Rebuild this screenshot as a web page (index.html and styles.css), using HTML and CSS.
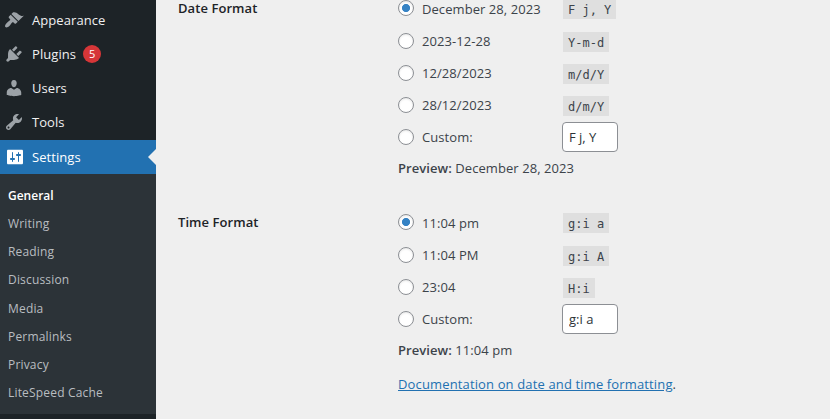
FILE: index.html
```
<!DOCTYPE html>
<html lang="en">
<head>
    <meta charset="UTF-8">
    <meta name="viewport" content="width=device-width, initial-scale=1.0">
    <title>General Settings</title>
    <link rel="stylesheet" href="styles.css">
</head>
<body>
    <div class="wrap">
        <nav class="menu">
            <a class="item">
                <svg viewBox="0 0 20 20"><path d="M14.48 11.06L7.41 3.99l1.5-1.5c.5-.56 2.3-.47 3.51.32 1.21.8 1.43 1.28 2.91 2.1 1.18.64 2.45 1.26 4.45.85zm-.71.71L6.7 4.7 4.93 6.47c-.39.39-.39 1.02 0 1.41l1.06 1.06c.39.39.39 1.03 0 1.42-.6.6-1.43 1.11-2.21 1.69-.35.26-.7.53-1.01.84C1.43 14.23.4 16.08 1.4 17.07c.99 1 2.84-.03 4.18-1.36.31-.31.58-.66.85-1.02.57-.78 1.08-1.61 1.69-2.21.39-.39 1.02-.39 1.41 0l1.06 1.06c.39.39 1.02.39 1.41 0z"/></svg>
                <span>Appearance</span>
            </a>
            <a class="item">
                <svg viewBox="0 0 20 20"><path d="M13.11 4.36L9.87 7.6 8 5.73l3.24-3.24c.35-.34 1.05-.2 1.56.32.52.51.66 1.21.31 1.55zm-8 1.77l.91-1.12 9.01 9.01-1.19.84c-.71.71-2.63 1.16-3.82 1.16H6.14L4.9 17.26c-.59.59-1.54.59-2.12 0-.59-.58-.59-1.53 0-2.12l1.24-1.24v-3.88c0-1.13.4-3.19 1.09-3.89zm7.26 3.97l3.24-3.24c.34-.35 1.04-.21 1.55.31.52.51.66 1.21.31 1.55l-3.24 3.25z"/></svg>
                <span>Plugins</span>
                <span class="count">5</span>
            </a>
            <a class="item">
                <svg viewBox="0 0 20 20"><path d="M10 9.25c-2.27 0-2.73-3.44-2.73-3.44C7 4.02 7.82 2 9.97 2c2.16 0 2.98 2.02 2.71 3.81 0 0-.41 3.44-2.68 3.44zm0 2.57L12.72 10c2.39 0 4.52 2.33 4.52 4.53v2.49s-3.65 1.13-7.24 1.13c-3.65 0-7.24-1.13-7.24-1.13v-2.49c0-2.25 1.94-4.48 4.47-4.48z"/></svg>
                <span>Users</span>
            </a>
            <a class="item">
                <svg viewBox="0 0 20 20"><path d="M16.68 9.77c-1.34 1.34-3.3 1.67-4.95.99l-5.41 6.52c-.99.99-2.59.99-3.58 0s-.99-2.59 0-3.57l6.52-5.42c-.68-1.65-.35-3.61.99-4.95 1.28-1.28 3.12-1.62 4.72-1.06l-2.89 2.89 2.82 2.82 2.86-2.87c.53 1.58.18 3.39-1.08 4.65zM3.81 16.21c.4.39 1.04.39 1.43 0 .4-.4.4-1.04 0-1.43-.39-.4-1.03-.4-1.43 0-.39.39-.39 1.03 0 1.43z"/></svg>
                <span>Tools</span>
            </a>
            <a class="item current">
                <svg viewBox="0 0 20 20"><path d="M18 16V4c0-.8-.5-1.3-1.3-1.3H3.3C2.5 2.7 2 3.2 2 4v12c0 .8.5 1.3 1.3 1.3h13.4c.8 0 1.3-.5 1.3-1.3zM8 11h1c.55 0 1 .45 1 1s-.45 1-1 1H8v1.5c0 .28-.22.5-.5.5s-.5-.22-.5-.5V13H6c-.55 0-1-.45-1-1s.45-1 1-1h1V5.5c0-.28.22-.5.5-.5s.5.22.5.5V11zm5-2h-1c-.55 0-1-.45-1-1s.45-1 1-1h1V5.5c0-.28.22-.5.5-.5s.5.22.5.5V7h1c.55 0 1 .45 1 1s-.45 1-1 1h-1v5.5c0 .28-.22.5-.5.5s-.5-.22-.5-.5V9z"/></svg>
                <span>Settings</span>
            </a>
            <ul class="submenu">
                <li class="active">General</li>
                <li>Writing</li>
                <li>Reading</li>
                <li>Discussion</li>
                <li>Media</li>
                <li>Permalinks</li>
                <li>Privacy</li>
                <li>LiteSpeed Cache</li>
            </ul>
        </nav>

        <main class="content">
            <section class="setting">
                <h2>Date Format</h2>
                <div class="field">
                    <label><input type="radio" name="date" checked><span class="name">December 28, 2023</span><code>F j, Y</code></label>
                    <label><input type="radio" name="date"><span class="name">2023-12-28</span><code>Y-m-d</code></label>
                    <label><input type="radio" name="date"><span class="name">12/28/2023</span><code>m/d/Y</code></label>
                    <label><input type="radio" name="date"><span class="name">28/12/2023</span><code>d/m/Y</code></label>
                    <label><input type="radio" name="date"><span class="name">Custom:</span><input type="text" value="F j, Y"></label>
                    <p class="preview"><strong>Preview:</strong> December 28, 2023</p>
                </div>
            </section>
            <section class="setting">
                <h2>Time Format</h2>
                <div class="field">
                    <label><input type="radio" name="time" checked><span class="name">11:04 pm</span><code>g:i a</code></label>
                    <label><input type="radio" name="time"><span class="name">11:04 PM</span><code>g:i A</code></label>
                    <label><input type="radio" name="time"><span class="name">23:04</span><code>H:i</code></label>
                    <label><input type="radio" name="time"><span class="name">Custom:</span><input type="text" value="g:i a"></label>
                    <p class="preview"><strong>Preview:</strong> 11:04 pm</p>
                    <p class="doc"><a href="#">Documentation on date and time formatting</a>.</p>
                </div>
            </section>
        </main>
    </div>
</body>
</html>
```
FILE: styles.css
```
* {
    box-sizing: border-box;
}
body {
    margin: 0;
    font-family: "Open Sans", "Noto Sans", sans-serif;
    font-size: 13px;
    letter-spacing: .07px;
    color: #3c434a;
    background: #efefef;
}
.wrap {
    display: flex;
    height: 419px;
    overflow: hidden;
}
/* left menu */
.menu {
    width: 156px;
    padding-top: 3px;
    background: #1d2327;
}
.item {
    display: flex;
    align-items: center;
    height: 34px;
    padding-left: 4px;
    color: #f0f0f1;
}
.item svg {
    width: 20px;
    height: 20px;
    margin-right: 8px;
    fill: #9ca2a7;
}
.item .count {
    width: 18px;
    height: 18px;
    margin-left: 7px;
    border-radius: 50%;
    font-size: 11px;
    line-height: 18px;
    text-align: center;
    color: #fff;
    background: #d63638;
}
.item.current {
    margin-top: 1px;
    color: #fff;
    background: #2271b1;
}
.item.current svg {
    margin: 0 7px 0 1px;
    fill: #fff;
}
.item.current::after {
    content: "";
    margin-left: auto;
    border: 8px solid transparent;
    border-left: 0;
    border-right-color: #efefef;
}
.submenu {
    height: 240px;
    margin: 0;
    padding: 8px 0 0 8px;
    list-style: none;
    background: #2c3338;
}
.submenu li {
    height: 28.15px;
    font-size: 12px;
    line-height: 28px;
    letter-spacing: .18px;
    color: #b9bdc0;
}
.submenu .active {
    font-weight: 600;
    letter-spacing: 0;
    color: #fff;
}
/* settings form */
.content {
    flex: 1;
    padding-left: 22px;
}
.setting {
    display: flex;
}
.setting h2 {
    width: 220px;
    margin: 0;
    font-size: 13px;
    font-weight: 600;
    line-height: 16px;
    color: #1d2327;
}
.field {
    margin-top: -7.7px;
}
.setting + .setting {
    margin-top: 36px;
}
.field label {
    display: flex;
    align-items: center;
    height: 32.15px;
}
.field input[type="radio"] {
    appearance: none;
    width: 16px;
    height: 16px;
    margin: 0 8px 0 0;
    border: 1px solid #8c8f94;
    border-radius: 50%;
    background: #fff;
    box-shadow: inset 0 1px 2px rgba(0, 0, 0, .1);
}
.field input[type="radio"]:checked {
    background: radial-gradient(circle, #3582c4 3.7px, #fff 4.4px);
}
.name {
    width: 140px;
    padding-top: 1px;
}
.field code {
    height: 20px;
    margin: 2px 0 0 1px;
    padding: 0 5px;
    font-family: "DejaVu Sans Mono", monospace;
    font-size: 12px;
    line-height: 22px;
    letter-spacing: 0;
    background: #dfdfdf;
}
.field input[type="text"] {
    width: 56px;
    height: 30px;
    padding: 0 6px;
    border: 1px solid #8c8f94;
    border-radius: 4px;
    font-family: inherit;
    font-size: 13px;
    color: #2c3338;
    background: #fff;
}
.field p {
    margin: 0;
    line-height: 20px;
}
.field .preview {
    margin-top: 5px;
}
.preview strong {
    font-weight: 600;
}
.field .doc {
    margin-top: 14px;
    letter-spacing: .14px;
}
.doc a {
    color: #2271b1;
}
```
